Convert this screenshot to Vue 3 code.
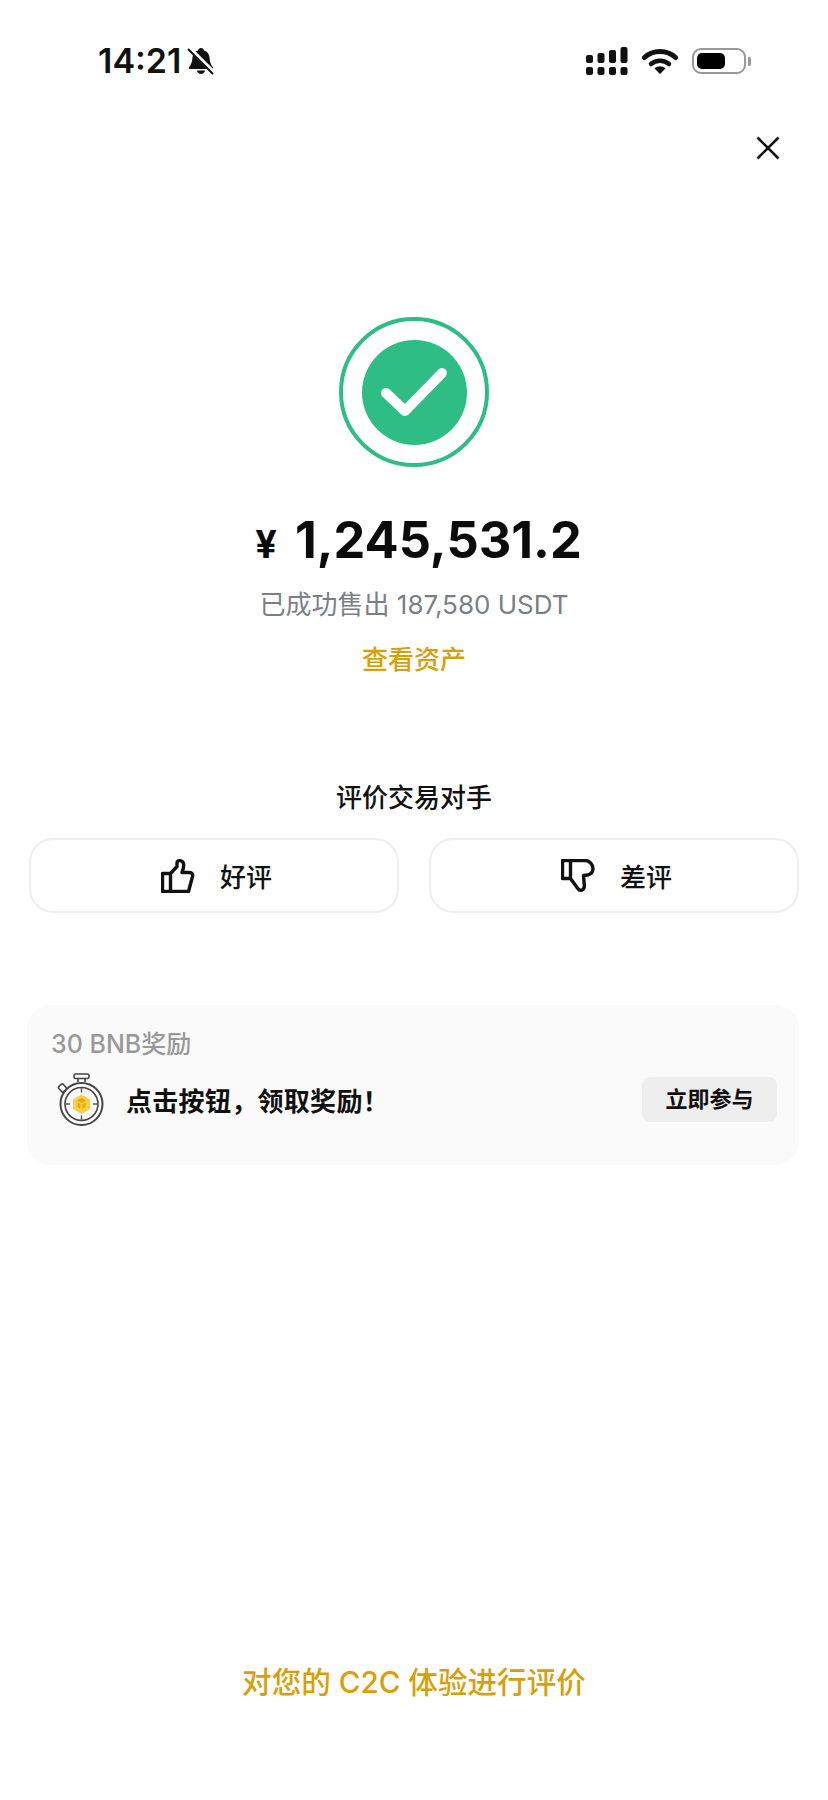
<script setup>
const signalBars = [
  { x: 0, top: 8, h: 8 },
  { x: 11.5, top: 6, h: 10 },
  { x: 23, top: 3, h: 13 },
  { x: 34.5, top: 0, h: 16 }
];
</script>

<template>
  <div class="page">
    <div class="status-bar">
      <div class="status-left">
        <span class="time">14:21</span>
        <svg class="bell" width="28" height="28" viewBox="0 0 28 28">
          <path d="M14 1c1.800 0 2.800 1 3 2.400 3.600 1 5.400 4 5.600 7.600.2 4 1.200 6.600 3.300 9.200.6.900.2 1.800-.9 1.800H3c-1.100 0-1.500-.9-.9-1.800 2.100-2.600 3.100-5.200 3.300-9.200.2-3.600 2-6.600 5.600-7.600.2-1.400 1.200-2.400 3-2.400z" fill="#111" />
          <path d="M10 23.500h8c-.3 2.200-1.900 3.500-4 3.500s-3.700-1.300-4-3.500z" fill="#111" />
          <path d="M2 1l25 25" stroke="#fff" stroke-width="4.500" />
          <path d="M1 2l25 25" stroke="#111" stroke-width="2" />
        </svg>
      </div>
      <div class="status-right">
        <svg width="42" height="28" viewBox="0 0 42 28">
          <rect v-for="b in signalBars" :key="b.x" :x="b.x" :y="b.top" width="7" :height="b.h" rx="2" fill="#111" />
          <rect v-for="b in signalBars" :key="'d' + b.x" :x="b.x" y="20" width="7" height="8" rx="2" fill="#111" />
        </svg>
        <svg class="wifi" width="36" height="26" viewBox="0 0 36 26">
          <path d="M2.500 9.500C11 1.500 25 1.500 33.500 9.500" fill="none" stroke="#111" stroke-width="5" stroke-linecap="round" />
          <path d="M9 16C14 11.500 22 11.500 27 16" fill="none" stroke="#111" stroke-width="4.500" stroke-linecap="round" />
          <path d="M12.500 20.500C15.500 17.500 20.500 17.500 23.500 20.500L18 26z" fill="#111" />
        </svg>
        <div class="battery-wrap">
          <div class="battery"><div class="battery-fill"></div></div>
          <div class="battery-nub"></div>
        </div>
      </div>
    </div>

    <div class="close-row">
      <svg width="24" height="24" viewBox="0 0 24 24">
        <path d="M1.500 1.500l21 21M22.500 1.500l-21 21" stroke="#111" stroke-width="2.600" />
      </svg>
    </div>

    <div class="result">
      <div class="ring">
        <div class="ring-inner">
          <svg width="66" height="50" viewBox="0 0 66 50">
            <path d="M5 26l19 18L61 6" fill="none" stroke="#fff" stroke-width="10" stroke-linecap="round" stroke-linejoin="round" />
          </svg>
        </div>
      </div>
      <div class="amount"><span class="yen">¥</span>1,245,531.2</div>
      <div class="sold">已成功售出 187,580 USDT</div>
      <div class="assets">查看资产</div>
    </div>

    <div class="rate">
      <div class="rate-title">评价交易对手</div>
      <div class="rate-buttons">
        <div class="rate-btn">
          <svg width="34" height="34" viewBox="0 0 34 34">
            <path d="M1.500 14.500h8v18h-8zM9.500 14.500l6.500-7V4c0-3.200 5.500-3.200 6.500.5.600 2.500-.3 6-1.500 9h7.500c2.500 0 3.700 2 3 4l-4 15H9.500" fill="none" stroke="#111" stroke-width="3.400" stroke-linejoin="round" />
          </svg>
          <span>好评</span>
        </div>
        <div class="rate-btn">
          <svg width="34" height="34" viewBox="0 0 34 34">
            <path d="M1.500 1.500h8v18h-8zM9.500 1.500h15c4 0 7.500 4.500 7.500 8 0 3-2 5.500-5 6.500l-4.500.5.800 9.500c.5 5-4 7-6.500 3.500L9.500 19.500" fill="none" stroke="#111" stroke-width="3.400" stroke-linejoin="round" />
          </svg>
          <span>差评</span>
        </div>
      </div>
    </div>

    <div class="reward">
      <div class="reward-label">30 BNB奖励</div>
      <div class="reward-row">
        <svg class="watch" width="48" height="56" viewBox="0 0 48 56">
          <rect x="17" y="2" width="15" height="4.500" rx="1.500" fill="none" stroke="#444" stroke-width="1.600" />
          <path d="M21 6.500v3.500M28 6.500v3.500" stroke="#444" stroke-width="1.600" />
          <rect x="2.500" y="12.500" width="6" height="7" rx="1.500" transform="rotate(-42 5.500 16)" fill="#fff" stroke="#444" stroke-width="1.600" />
          <circle cx="24.500" cy="32" r="21" fill="#fff" stroke="#444" stroke-width="2" />
          <circle cx="24.500" cy="32" r="16.500" fill="#fafafa" stroke="#444" stroke-width="1.600" />
          <path d="M24.500 15.500v5M24.500 43.500v5M8 32h5M36 32h5" stroke="#555" stroke-width="1.400" />
          <path d="M24.500 22.500l8.500 5v9.500l-8.500 5-8.500-5v-9.500z" fill="#f7cf4a" />
          <path d="M24.500 26l4.500 2.600-4.500 2.600-4.500-2.600zM20.500 30.500l3 1.800v4.600l-3-1.800zM28.500 30.500l-3 1.800v4.600l3-1.800z" fill="#e8a90e" />
        </svg>
        <div class="reward-text">点击按钮，领取奖励！</div>
        <div class="join">立即参与</div>
      </div>
    </div>

    <div class="footer">对您的 C2C 体验进行评价</div>
  </div>
</template>

<style scoped>
.page {
  width: 828px;
  height: 1800px;
  background: #fff;
  display: flex;
  flex-direction: column;
  font-family: Inter, "Noto Sans CJK SC", sans-serif;
  color: #111;
  overflow: hidden;
}

.status-bar {
  display: flex;
  justify-content: space-between;
  align-items: center;
  height: 28px;
  padding: 47px 77px 0 98px;
}

.status-left,
.status-right {
  display: flex;
  align-items: center;
}

.time {
  font-size: 34px;
  font-weight: 600;
  line-height: 28px;
}

.bell {
  margin-left: 6px;
}

.status-right {
  gap: 14px;
}

.battery-wrap {
  display: flex;
  align-items: center;
  gap: 2px;
}

.battery {
  box-sizing: border-box;
  width: 54px;
  height: 26px;
  border: 2px solid #999;
  border-radius: 9px;
  padding: 3px;
}

.battery-fill {
  width: 28px;
  height: 100%;
  background: #000;
  border-radius: 5px;
}

.battery-nub {
  width: 3px;
  height: 9px;
  background: #999;
  border-radius: 0 2px 2px 0;
}

.close-row {
  display: flex;
  justify-content: flex-end;
  padding: 61px 48px 0 0;
}

.result {
  display: flex;
  flex-direction: column;
  align-items: center;
  margin-top: 157px;
}

.ring {
  box-sizing: border-box;
  width: 150px;
  height: 150px;
  border: 4px solid #2ebd85;
  border-radius: 50%;
  display: flex;
  align-items: center;
  justify-content: center;
}

.ring-inner {
  width: 105px;
  height: 105px;
  border-radius: 50%;
  background: #2ebd85;
  display: flex;
  align-items: center;
  justify-content: center;
}

.amount {
  margin-top: 43px;
  padding-left: 9px;
  font-size: 50.5px;
  font-weight: 700;
  line-height: 60px;
  color: #0b0b0b;
}

.yen {
  font-size: 38px;
  margin-right: 18px;
}

.sold {
  margin-top: 11px;
  font-size: 26px;
  line-height: 40px;
  color: #7a7f87;
}

.assets {
  margin-top: 15px;
  font-size: 26px;
  line-height: 40px;
  font-weight: 500;
  color: #d89f0b;
}

.rate {
  margin-top: 98px;
  padding: 0 29px;
}

.rate-title {
  text-align: center;
  font-size: 26px;
  line-height: 40px;
  font-weight: 500;
}

.rate-buttons {
  display: flex;
  justify-content: space-between;
  margin-top: 20px;
}

.rate-btn {
  box-sizing: border-box;
  width: 370px;
  height: 75px;
  border: 2px solid #eee;
  border-radius: 24px;
  display: flex;
  align-items: center;
  justify-content: center;
  gap: 25px;
  font-size: 26px;
  font-weight: 500;
  padding-left: 5px;
}

.reward {
  box-sizing: border-box;
  margin: 92px 29px 0 27px;
  height: 160px;
  background: #fafafa;
  border-radius: 24px;
  padding: 24px 22px 0 24px;
}

.reward-label {
  font-size: 25px;
  line-height: 30px;
  font-weight: 500;
  color: #999;
}

.reward-row {
  display: flex;
  align-items: center;
  margin-top: 11px;
}

.watch {
  margin-left: 6px;
  margin-top: 2px;
  flex-shrink: 0;
}

.reward-text {
  margin-left: 21px;
  font-size: 26px;
  font-weight: 700;
  letter-spacing: 0.3px;
  flex: 1;
}

.join {
  width: 135px;
  height: 45px;
  line-height: 45px;
  text-align: center;
  background: #eee;
  border-radius: 8px;
  font-size: 22px;
  font-weight: 700;
}

.footer {
  margin-top: auto;
  margin-bottom: 100px;
  text-align: center;
  font-size: 29.6px;
  line-height: 36px;
  font-weight: 500;
  color: #d89f0b;
}
</style>
